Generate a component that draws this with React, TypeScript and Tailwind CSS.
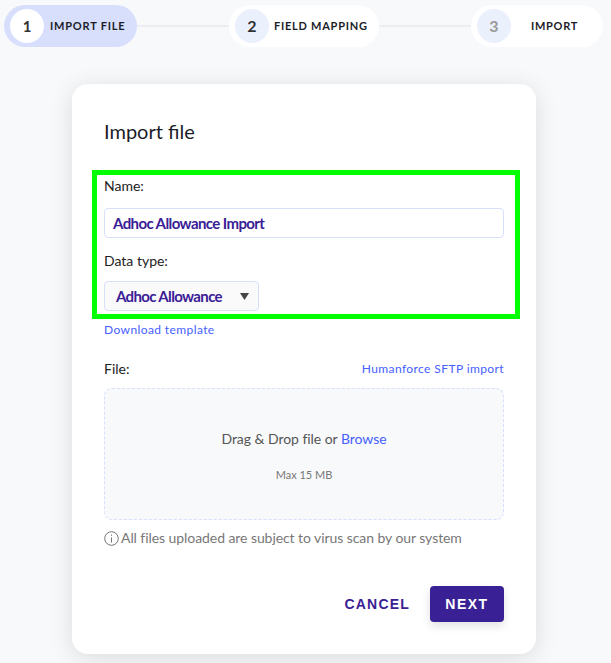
function Stepper() {
  return (
    <div className="flex items-center pl-1 pr-2 pt-[5px]">
      {/* step 1 */}
      <div className="flex h-[42px] w-[133px] shrink-0 items-center rounded-full bg-[#d7dffc] pl-1.5">
        <span className="flex h-[34px] w-[34px] items-center justify-center rounded-full bg-white text-[15px] font-bold text-[#333]">
          1
        </span>
        <span className="ml-1.5 text-[11px] font-bold tracking-[0.8px] text-[#1c1c28]">IMPORT FILE</span>
      </div>
      <div className="h-0.5 flex-1 bg-[#eceef2]" />
      {/* step 2 */}
      <div className="flex h-[42px] w-[150px] shrink-0 items-center rounded-full bg-white pl-1.5">
        <span className="flex h-[34px] w-[34px] items-center justify-center rounded-full bg-[#ebf0fd] text-[16px] font-bold text-[#333]">
          2
        </span>
        <span className="ml-[5px] text-[11px] font-bold tracking-[0.75px] text-[#1c1c28]">FIELD MAPPING</span>
      </div>
      <div className="h-0.5 flex-1 bg-[#eceef2]" />
      {/* step 3 */}
      <div className="flex h-[42px] w-[132px] shrink-0 items-center rounded-full bg-white pl-1.5">
        <span className="flex h-[34px] w-[34px] items-center justify-center rounded-full bg-[#ebf0fd] text-[16px] font-bold text-[#999]">
          3
        </span>
        <span className="ml-5 text-[11px] font-bold tracking-[0.7px] text-[#1c1c28]">IMPORT</span>
      </div>
    </div>
  );
}

export default function App() {
  return (
    <div className="h-[663px] w-[611px] overflow-hidden bg-[#f8f9fb] font-['Lato',sans-serif]">
      <Stepper />
      <div className="relative ml-[72px] mt-[37px] h-[570px] w-[464px] rounded-2xl bg-white px-8 pt-[35px] shadow-[0_4px_24px_rgba(0,0,0,0.12)]">
        <h1 className="text-xl leading-6 text-[#1c1c28]">Import file</h1>

        <div className="mt-[34px] text-sm leading-[17px] text-[#222]">Name:</div>
        <input
          readOnly
          value="Adhoc Allowance Import"
          className="mt-[14px] block h-[30px] w-full rounded border border-[#d7dffc] bg-white px-2 text-[15px] font-bold tracking-[-0.6px] text-[#3a2095] outline-none"
        />

        <div className="mt-3.5 text-sm leading-[17px] text-[#222]">Data type:</div>
        <div className="mt-[12px] flex h-[30px] w-[155px] items-center justify-between rounded border border-[#d7dffc] bg-[#fafafa] pl-[11px] pr-[9px]">
          <span className="text-[15px] font-bold tracking-[-0.65px] text-[#3a2095]">Adhoc Allowance</span>
          <svg width="9" height="7" viewBox="0 0 9 7" className="fill-[#444]">
            <path d="M0 0h9L4.500 7z" />
          </svg>
        </div>

        <div className="mt-2.5 text-xs leading-[17px] tracking-[0.4px] text-[#4560ff]">Download template</div>

        <div className="mt-[22px] flex items-center justify-between">
          <span className="text-sm leading-[17px] text-[#222]">File:</span>
          <span className="text-xs leading-[17px] tracking-[0.4px] text-[#4560ff]">Humanforce SFTP import</span>
        </div>

        <div className="mt-[11px] flex h-[132px] w-full flex-col items-center rounded-lg border border-dashed border-[#d7dffc] bg-[#f8f9fb] pt-[41px]">
          <div className="text-sm leading-[17px] tracking-[-0.05px] text-[#555]">
            Drag &amp; Drop file or <span className="text-[#4560ff]">Browse</span>
          </div>
          <div className="mt-[21px] text-[11px] leading-[14px] text-[#777]">Max 15 MB</div>
        </div>

        <div className="mt-[9px] flex items-center gap-[2px] text-sm leading-[18px] tracking-[-0.07px] text-[#777]">
          <svg width="15" height="15" viewBox="0 0 15 15" fill="none" stroke="#666" strokeWidth="0.9">
            <circle cx="7.500" cy="7.500" r="6.800" />
            <path d="M7.500 6.500v5M7.500 3.600v1.200" />
          </svg>
          <span>All files uploaded are subject to virus scan by our system</span>
        </div>

        <div className="mt-[39px] flex items-center justify-end gap-5">
          <button className="font-['Liberation_Sans',sans-serif] text-sm font-bold tracking-[1.2px] text-[#3a2095]">
            CANCEL
          </button>
          <button className="h-9 w-[74px] rounded bg-[#3a2095] font-['Liberation_Sans',sans-serif] text-sm font-bold tracking-[1.5px] text-white shadow-[0_4px_10px_rgba(0,0,0,0.12)]">
            NEXT
          </button>
        </div>

        {/* highlight box drawn over the name and data type fields */}
        <div className="pointer-events-none absolute left-5 top-[86px] h-[149px] w-[428px] border-[5px] border-[#00ff00]" />
      </div>
    </div>
  );
}
